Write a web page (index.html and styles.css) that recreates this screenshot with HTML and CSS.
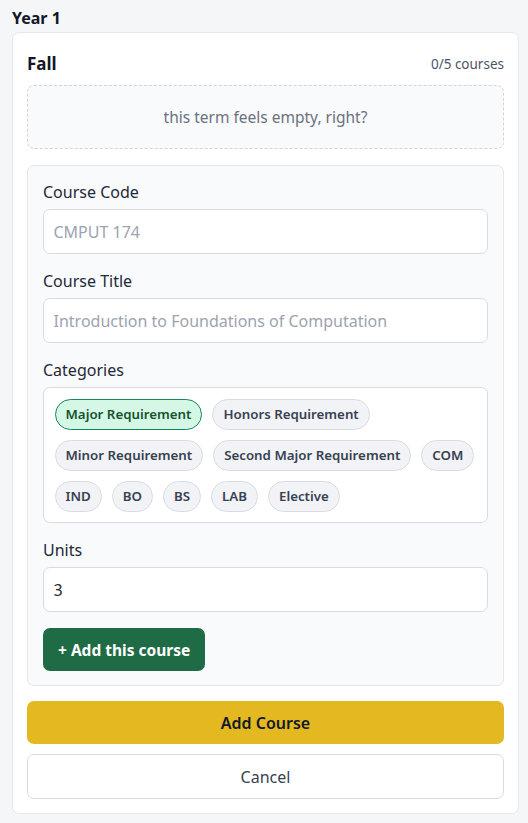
FILE: index.html
```html
<!DOCTYPE html>
<html lang="en">
<head>
<meta charset="utf-8">
<title>Planner</title>
<link rel="stylesheet" href="styles.css">
</head>
<body>
<section class="year">
  <h2 class="year-title">Year 1</h2>
  <div class="term-card">
    <div class="term-head">
      <h3 class="term-name">Fall</h3>
      <span class="term-count">0/5 courses</span>
    </div>
    <div class="empty-box">this term feels empty, right?</div>
    <form class="course-form">
      <label class="field-label" for="code">Course Code</label>
      <input class="field-input" id="code" type="text" placeholder="CMPUT 174">
      <label class="field-label" for="title">Course Title</label>
      <input class="field-input" id="title" type="text" placeholder="Introduction to Foundations of Computation">
      <div class="field-label">Categories</div>
      <div class="chip-box">
        <span class="chip chip-active">Major Requirement</span>
        <span class="chip">Honors Requirement</span>
        <span class="chip">Minor Requirement</span>
        <span class="chip">Second Major Requirement</span>
        <span class="chip">COM</span>
        <span class="chip">IND</span>
        <span class="chip">BO</span>
        <span class="chip">BS</span>
        <span class="chip">LAB</span>
        <span class="chip">Elective</span>
      </div>
      <label class="field-label" for="units">Units</label>
      <input class="field-input" id="units" type="text" value="3">
      <div class="form-actions">
        <button type="button" class="btn-green">+ Add this course</button>
      </div>
    </form>
    <button type="button" class="btn-yellow">Add Course</button>
    <button type="button" class="btn-cancel">Cancel</button>
  </div>
</section>
</body>
</html>
```

FILE: styles.css
```css
* { box-sizing: border-box; }
html, body {
  margin: 0;
  padding: 0;
  background: #f5f6f8;
  font-family: "Noto Sans", "Open Sans", sans-serif;
  color: #1f2937;
}
.year {
  padding: 7px 9px 0 12px;
}
.year-title {
  margin: 0 0 3px 0;
  font-size: 16px;
  font-weight: 700;
  line-height: 22px;
  color: #111827;
}
.term-card {
  background: #ffffff;
  border: 1px solid #e5e7eb;
  border-radius: 7px;
  padding: 14px 14px 14px 14px;
  display: flex;
  flex-direction: column;
}
.term-head {
  display: flex;
  justify-content: space-between;
  align-items: center;
  height: 32px;
  margin-bottom: 6px;
}
.term-name {
  margin: 0;
  font-size: 17px;
  font-weight: 700;
  color: #111827;
}
.term-count {
  font-size: 13.5px;
  color: #4b5563;
  padding-top: 2px;
}
.empty-box {
  height: 64px;
  border: 1.5px dashed #d1d5db;
  border-radius: 7px;
  background: #f9fafb;
  display: flex;
  align-items: center;
  justify-content: center;
  font-size: 15.5px;
  color: #6b7280;
  margin-bottom: 16px;
}
.course-form {
  background: #f9fafb;
  border: 1px solid #e5e7eb;
  border-radius: 7px;
  padding: 15px 15px 14px 15px;
  display: flex;
  flex-direction: column;
  margin: 0 0 15px 0;
}
.field-label {
  font-size: 16px;
  line-height: 22px;
  color: #1f2937;
  margin-bottom: 6px;
}
.field-input {
  height: 45px;
  border: 1.5px solid #d8dce2;
  border-radius: 7px;
  background: #fff;
  padding: 0 9.5px;
  font-family: inherit;
  font-size: 16px;
  color: #1f2937;
  margin-bottom: 16px;
  outline: none;
}
.field-input::placeholder { color: #9ca3af; }
.chip-box {
  background: #fff;
  border: 1.5px solid #d8dce2;
  border-radius: 7px;
  padding: 10.5px 10.5px 10.5px 10.5px;
  display: flex;
  flex-wrap: wrap;
  gap: 10px;
  margin-bottom: 16px;
}
.chip {
  height: 31px;
  display: inline-flex;
  align-items: center;
  padding: 0 10px;
  border: 1.5px solid #d8dce2;
  border-radius: 16px;
  background: #f1f3f6;
  font-size: 13.3px;
  font-weight: 600;
  color: #374151;
}
.chip-active {
  background: #d5f8e6;
  border-color: #16865a;
  color: #14532d;
}
.form-actions { display: flex; }
.btn-green {
  height: 43px;
  padding: 0 15px;
  border: none;
  border-radius: 7px;
  background: #1f6b45;
  color: #fff;
  font-family: inherit;
  font-size: 15.5px;
  font-weight: 700;
}
.btn-yellow {
  height: 43px;
  border: none;
  border-radius: 7px;
  background: #e4b820;
  color: #111827;
  font-family: inherit;
  font-size: 16px;
  font-weight: 600;
  margin-bottom: 10px;
}
.btn-cancel {
  height: 45px;
  border: 1.5px solid #d8dce2;
  border-radius: 7px;
  background: #fff;
  color: #374151;
  font-family: inherit;
  font-size: 16px;
}
```
